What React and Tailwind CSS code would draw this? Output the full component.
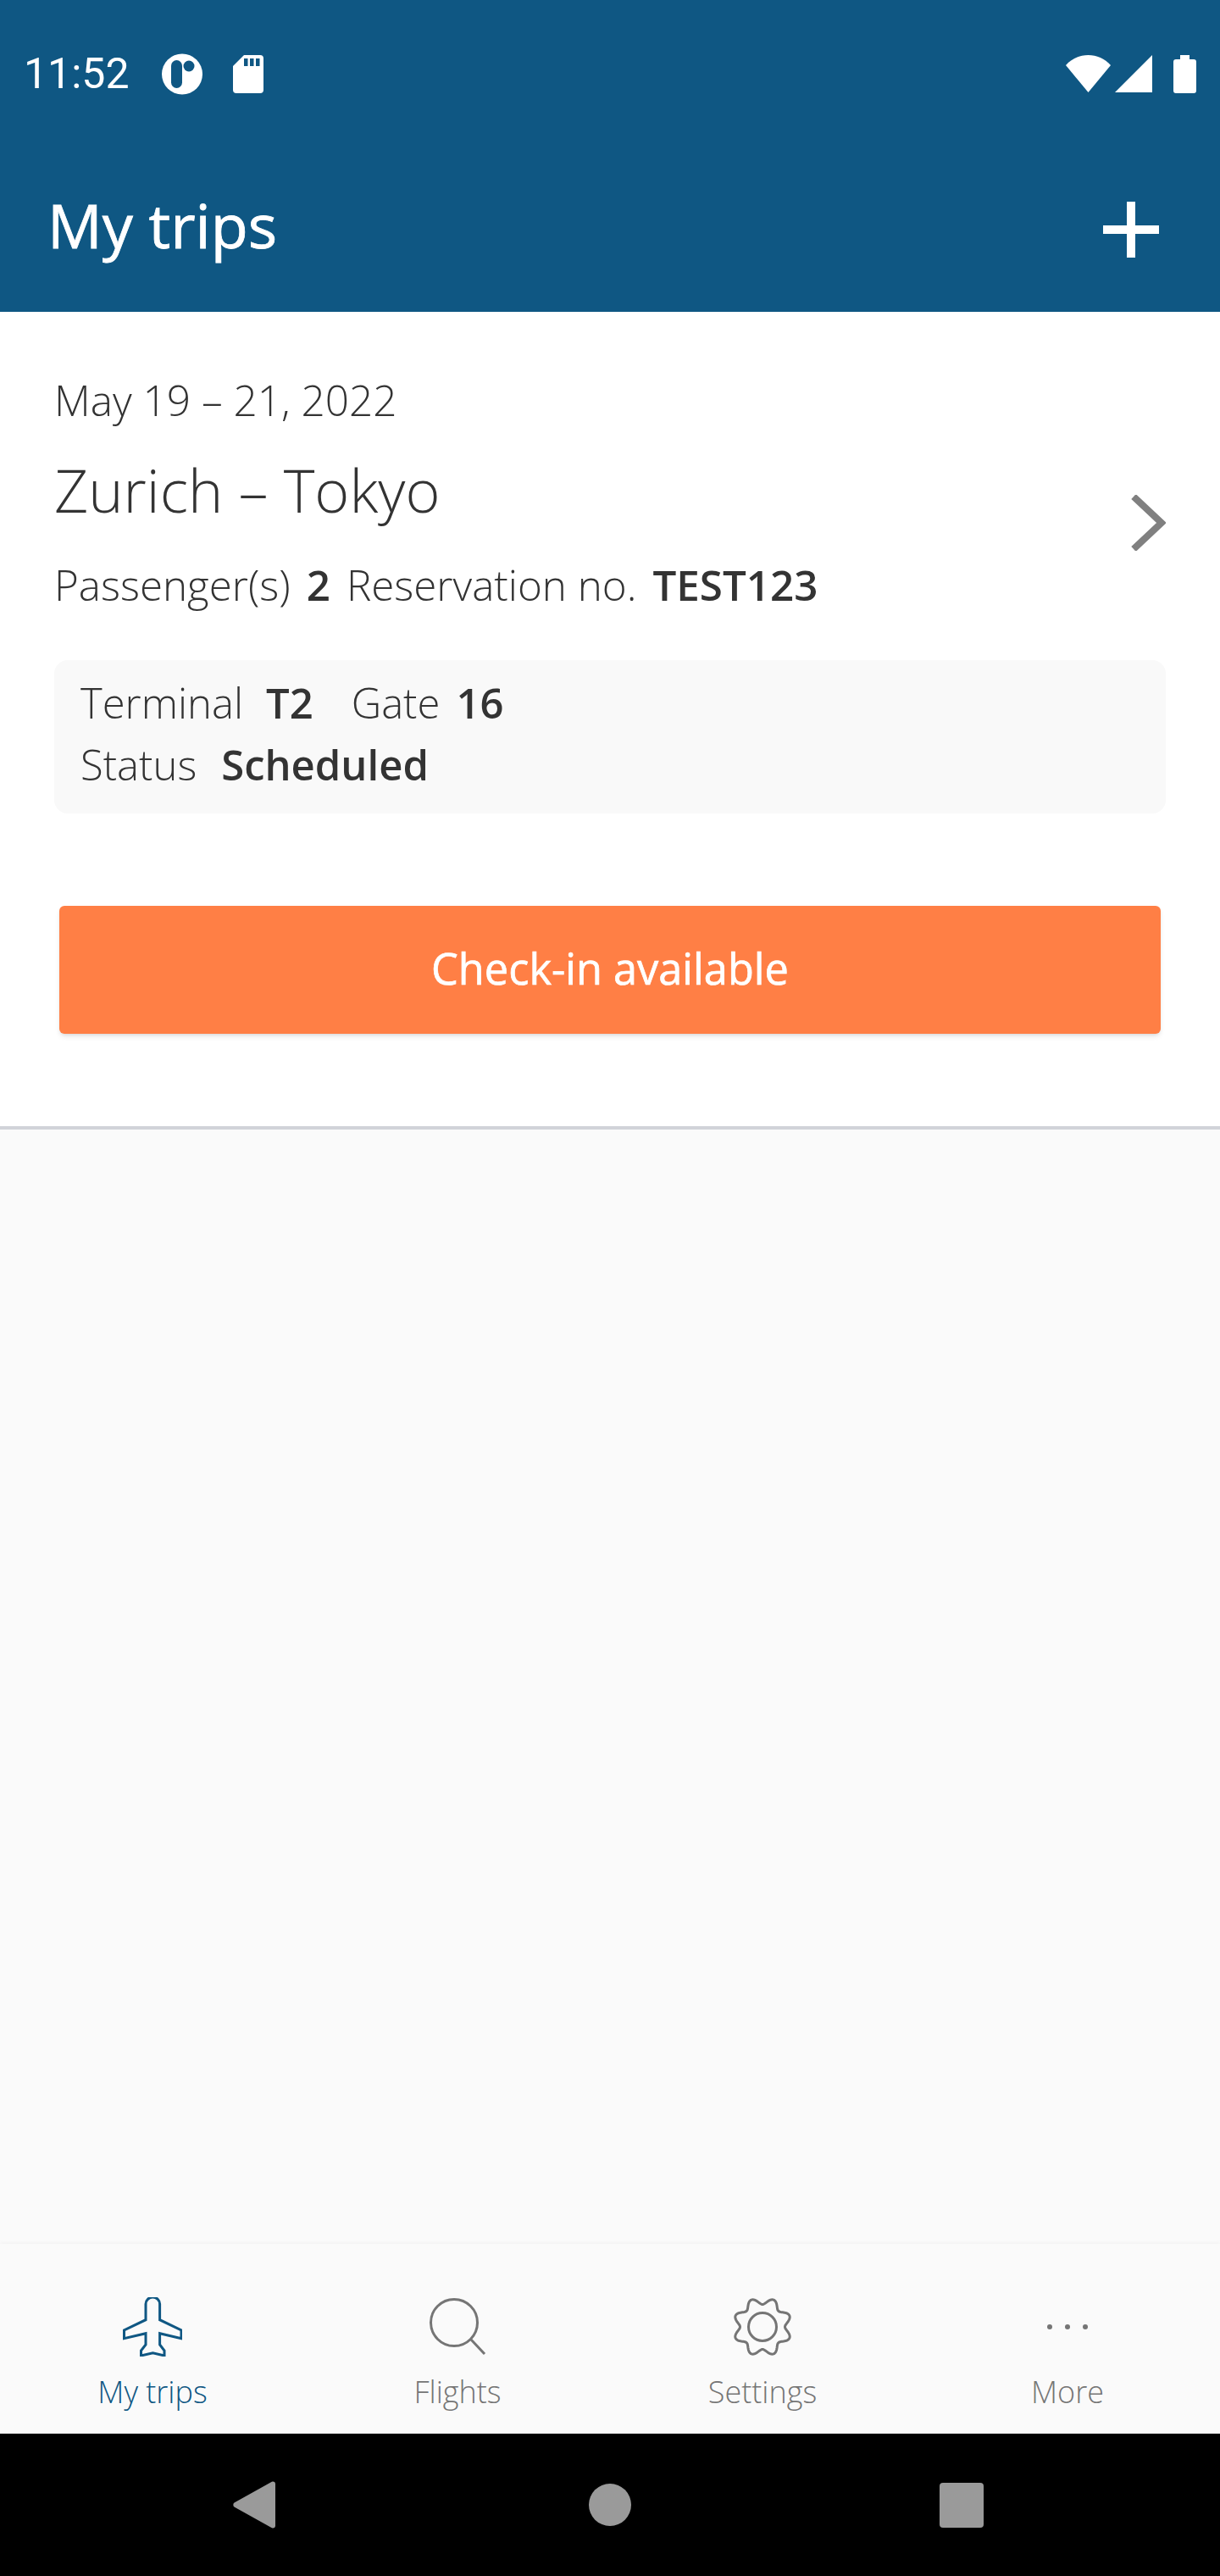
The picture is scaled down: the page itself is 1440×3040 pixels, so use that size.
const gearPath = (() => {
  const pts = [];
  for (let i = 0; i < 240; i++) {
    const a = (i / 240) * Math.PI * 2;
    const r = 30.5 + 4 * Math.cos(8 * (a - Math.PI / 8));
    pts.push(`${(35 + r * Math.cos(a)).toFixed(2)} ${(35 + r * Math.sin(a)).toFixed(2)}`);
  }
  return `M${pts.join("L")}Z`;
})();

function LogoIcon() {
  return (
    <svg width="48" height="49" viewBox="0 0 48 49">
      <circle cx="24" cy="24.5" r="24" fill="#fff" />
      <rect x="11" y="8" width="13" height="33" rx="6.5" fill="#0f5783" />
      <circle cx="32" cy="15" r="6.5" fill="#0f5783" />
    </svg>
  );
}

function SdIcon() {
  return (
    <svg width="36" height="45" viewBox="0 0 36 45">
      <path d="M13 0H32a4 4 0 0 1 4 4V41a4 4 0 0 1-4 4H4a4 4 0 0 1-4-4V13Z" fill="#fff" />
      <rect x="13" y="4" width="4.5" height="9" fill="#0f5783" />
      <rect x="20" y="4" width="4.5" height="9" fill="#0f5783" />
      <rect x="27" y="4" width="4.5" height="9" fill="#0f5783" />
    </svg>
  );
}

function TabIcon({ name }) {
  if (name === "plane") {
    return (
      <svg width="70" height="70" viewBox="0 0 70 70" fill="none" stroke="currentColor" strokeWidth="3">
        <path d="M27 26.7V8a8.3 8 0 0 1 16.6 0V26.7L69 39V48.7L43.6 42.7V56L49 63V69L35.4 65.7L21.5 69V63L27 56V42.7L1.5 48.7V39Z" />
      </svg>
    );
  }
  if (name === "search") {
    return (
      <svg width="70" height="70" viewBox="0 0 70 70" fill="none" stroke="currentColor" strokeWidth="3">
        <circle cx="31" cy="30" r="27.5" />
        <path d="M51 50L67 67" />
      </svg>
    );
  }
  if (name === "gear") {
    return (
      <svg width="70" height="70" viewBox="0 0 70 70" fill="none" stroke="currentColor" strokeWidth="3">
        <path d={gearPath} />
        <circle cx="35" cy="35" r="16.5" />
      </svg>
    );
  }
  return (
    <svg width="70" height="70" viewBox="0 0 70 70" fill="currentColor">
      <circle cx="14" cy="35" r="3" />
      <circle cx="35" cy="35" r="3" />
      <circle cx="56" cy="35" r="3" />
    </svg>
  );
}

const tabs = [
  { label: "My trips", icon: "plane", active: true },
  { label: "Flights", icon: "search" },
  { label: "Settings", icon: "gear" },
  { label: "More", icon: "dots" },
];

export default function App() {
  return (
    <div className="h-[3040px] flex flex-col bg-[#fafafa] font-['Open_Sans',sans-serif] text-[#333333]">
      <div className="h-[368px] bg-[#0f5783] text-white shrink-0">
        <div className="h-[174px] flex items-center justify-between pl-[28px] pr-[28px]">
          <div className="flex items-center">
            <span className="font-['Roboto',sans-serif] text-[50px] leading-none w-[122px]">11:52</span>
            <div className="ml-[41px] flex items-center gap-[36px]">
              <LogoIcon />
              <SdIcon />
            </div>
          </div>
          <div className="flex items-center">
            <svg width="53" height="44" viewBox="0 0 53 44">
              <path d="M0 12C14-4 39-4 53 12L26.5 44Z" fill="#fff" />
            </svg>
            <svg className="ml-[5px]" width="44" height="44" viewBox="0 0 44 44">
              <path d="M44 0V44H0Z" fill="#fff" />
            </svg>
            <svg className="ml-[25px]" width="27" height="45" viewBox="0 0 27 45">
              <path d="M8 0H19V5H24a3 3 0 0 1 3 3V42a3 3 0 0 1-3 3H3a3 3 0 0 1-3-3V8a3 3 0 0 1 3-3H8Z" fill="#fff" />
            </svg>
          </div>
        </div>
        <div className="h-[194px] flex items-center justify-between pl-[56px] pr-[72px]">
          <h1 className="text-[72px] leading-none font-normal mb-[12px] [-webkit-text-stroke:0.8px_white]">My trips</h1>
          <svg width="66" height="66" viewBox="0 0 66 66">
            <path d="M28 0H38V28H66V38H38V66H28V38H0V28H28Z" fill="#fff" />
          </svg>
        </div>
      </div>

      <div className="bg-white border-b-[4px] border-[#d1d3d9] px-[64px] pt-[72px] pb-[109px] shrink-0">
        <div className="flex justify-between items-start">
          <div className="font-light">
            <div className="text-[49.5px] leading-[64px]">May 19 – 21, 2022</div>
            <div className="text-[70px] leading-[96px] mt-[26px]">Zurich – Tokyo</div>
            <div className="text-[49.3px] leading-[64px] mt-[32px] flex">
              <span>Passenger(s)</span>
              <span className="font-semibold ml-[19px]">2</span>
              <span className="ml-[19px]">Reservation no.</span>
              <span className="font-semibold ml-[19px]">TEST123</span>
            </div>
          </div>
          <svg className="mt-[144px]" width="42" height="66" viewBox="0 0 42 66" fill="none" stroke="#808080" strokeWidth="8">
            <path d="M4 2L37 33L4 64" />
          </svg>
        </div>
        <div className="mt-[57px] h-[181px] rounded-[16px] bg-[#f9f9f9] px-[31px] pt-[14px] text-[49px] leading-[73px] font-light">
          <div className="flex">
            <span>Terminal</span>
            <span className="font-semibold ml-[27px]">T2</span>
            <span className="ml-[45px]">Gate</span>
            <span className="font-semibold ml-[19px]">16</span>
          </div>
          <div className="flex">
            <span>Status</span>
            <span className="font-semibold ml-[29px]">Scheduled</span>
          </div>
        </div>
        <div className="mt-[109px] mx-[6px] h-[151px] rounded-[6px] bg-[#ff7f45] shadow-md flex items-center justify-center pb-[4px] text-white text-[50.5px] font-normal [-webkit-text-stroke:0.7px_white]">
          Check-in available
        </div>
      </div>

      <div className="flex-1" />

      <div className="h-[224px] shrink-0 grid grid-cols-4 pt-[63px] bg-[#fafafa] shadow-[0_-2px_4px_rgba(0,0,0,0.03)]">
        {tabs.map((tab) => (
          <div
            key={tab.label}
            className={`flex flex-col items-center font-light ${tab.active ? "text-[#0f5783]" : "text-[#757575]"}`}
          >
            <TabIcon name={tab.icon} />
            <span className="text-[36px] leading-[48px] mt-[18px]">{tab.label}</span>
          </div>
        ))}
      </div>

      <div className="h-[168px] shrink-0 bg-black grid grid-cols-3 items-center justify-items-center px-[97px]">
        <svg className="mr-[9px]" width="50" height="56" viewBox="0 0 50 56">
          <path d="M47 0.5a3 3 0 0 1 3 3V52.5a3 3 0 0 1-3 3a3 3 0 0 1-2-0.7L1.5 30.5a3.2 3.2 0 0 1 0-5L45 1.2a3 3 0 0 1 2-0.7Z" fill="#9a9a9a" />
        </svg>
        <div className="w-[50px] h-[50px] rounded-full bg-[#9a9a9a]" />
        <div className="w-[52px] h-[53px] rounded-[4px] bg-[#9a9a9a]" />
      </div>
    </div>
  );
}
